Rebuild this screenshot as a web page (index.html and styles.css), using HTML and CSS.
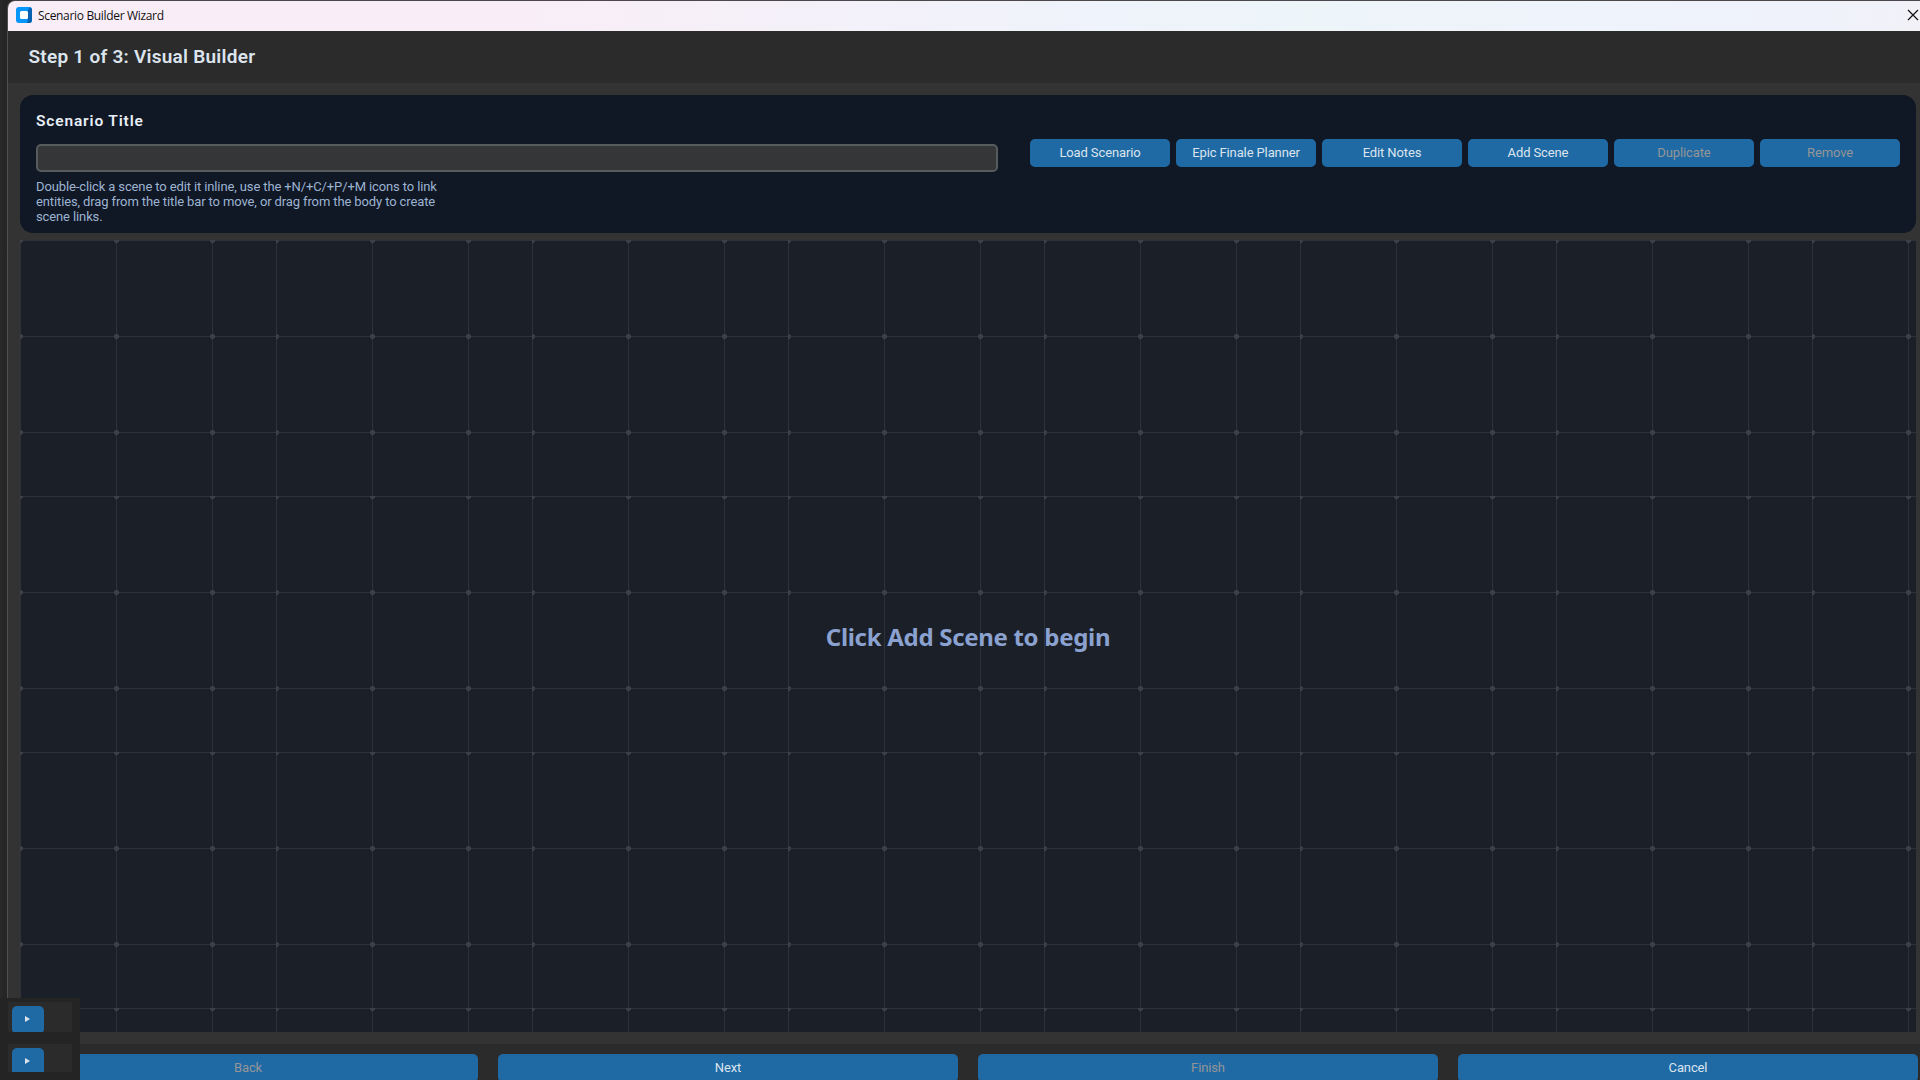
FILE: index.html
```html
<!DOCTYPE html>
<html lang="en">
<head>
<meta charset="utf-8">
<title>Scenario Builder Wizard</title>
<link rel="stylesheet" href="styles.css">
</head>
<body>
<div class="window">
  <div class="titlebar">
    <svg class="app-icon" width="16" height="16" viewBox="0 0 16 16"><rect width="16" height="16" rx="3" fill="#0596fb"/><path d="M12 3l2-2.700q2 .7 2 2.700v10q0 3-3 3h-2l1-4z" fill="#0562b1"/><rect x="4" y="4" width="8" height="8" rx="1.500" fill="#fff"/></svg>
    <span class="titlebar-text">Scenario Builder Wizard</span>
    <svg class="close" width="12" height="12" viewBox="0 0 12 12"><path d="M1 1l10 10M11 1L1 11" stroke="#111" stroke-width="1.200"/></svg>
  </div>
  <header class="step"><h1>Step 1 of 3: Visual Builder</h1></header>
  <main class="content">
    <section class="card">
      <div class="fields">
        <label class="label" for="title">Scenario Title</label>
        <input class="entry" id="title" type="text">
        <p class="hint">Double-click a scene to edit it inline, use the +N/+C/+P/+M icons to link<br>entities, drag from the title bar to move, or drag from the body to create<br>scene links.</p>
      </div>
      <div class="actions">
        <button class="btn">Load Scenario</button>
        <button class="btn">Epic Finale Planner</button>
        <button class="btn">Edit Notes</button>
        <button class="btn">Add Scene</button>
        <button class="btn" disabled>Duplicate</button>
        <button class="btn" disabled>Remove</button>
      </div>
    </section>
    <section class="canvas">
      <svg class="grid" width="1896" height="792">
        <defs>
          <path id="dot" d="M-1-2h3v1h1v3h-1v1h-3v-1h-1v-3h1z"/>
          <pattern id="tile" width="256" height="256" patternUnits="userSpaceOnUse">
            <path d="M0 0h256v1H0zM0 96h256v1H0zM0 192h256v1H0zM0 0h1v256H0zM96 0h1v256h-1zM192 0h1v256h-1z" fill="#2f323a"/>
            <g fill="#3c3f47">
              <use href="#dot" x="0" y="0"/><use href="#dot" x="96" y="0"/><use href="#dot" x="192" y="0"/>
              <use href="#dot" x="0" y="96"/><use href="#dot" x="96" y="96"/><use href="#dot" x="192" y="96"/>
              <use href="#dot" x="0" y="192"/><use href="#dot" x="96" y="192"/><use href="#dot" x="192" y="192"/>
            </g>
          </pattern>
        </defs>
        <rect width="1896" height="792" fill="url(#tile)"/>
      </svg>
      <div class="empty">Click Add Scene to begin</div>
    </section>
  </main>
  <footer class="nav">
    <button class="btn" disabled>Back</button>
    <button class="btn">Next</button>
    <button class="btn" disabled>Finish</button>
    <button class="btn">Cancel</button>
  </footer>
</div>
<aside class="side">
  <div class="side-row"><button class="side-btn"><svg width="5" height="6" viewBox="0 0 5 6"><path d="M0 0l5 3-5 3z" fill="#dce4ee"/></svg></button></div>
  <div class="side-row short"><button class="side-btn"><svg width="5" height="6" viewBox="0 0 5 6"><path d="M0 0l5 3-5 3z" fill="#dce4ee"/></svg></button></div>
</aside>
</body>
</html>
```
FILE: styles.css
```css
* { box-sizing: border-box; }
body {
  margin: 0;
  width: 1920px;
  height: 1080px;
  overflow: hidden;
  position: relative;
  padding: 0 0 0 7px;
  background: linear-gradient(90deg, #292929, #242424 7px);
  font-family: Roboto, sans-serif;
}
.window {
  height: 1080px;
  display: flex;
  flex-direction: column;
  background: #333;
  border-left: 1px solid #505050;
  border-top: 1px solid #4a464a;
  border-top-left-radius: 8px;
  overflow: hidden;
}
.titlebar {
  height: 30px;
  flex: none;
  display: flex;
  align-items: center;
  padding: 0 1px 2px 8px;
  background: linear-gradient(90deg, #f9eef7 0%, #f9eef7 27%, #f3f1f9 45%, #eff3fb 58%, #edf5f9 68%, #eff3fb 80%, #eff2fb 94%, #f2f1f8 100%);
}
.app-icon { flex: none; }
.titlebar-text {
  margin-left: 6px;
  padding-top: 2px;
  font: 12px/16px "Open Sans", sans-serif;
  letter-spacing: -0.33px;
  color: #111;
}
.close { margin-left: auto; }
.step {
  height: 52px;
  flex: none;
  display: flex;
  align-items: center;
  padding: 0 20.500px;
  background: #2b2b2b;
}
.step h1 {
  margin: 0;
  font-size: 19px;
  line-height: 24px;
  font-weight: 600;
  letter-spacing: 0.25px;
  color: #dce4ee;
}
.content {
  height: 961px;
  flex: none;
  display: flex;
  flex-direction: column;
  padding: 12px 4px 0 12px;
  gap: 7px;
}
.card {
  height: 138px;
  flex: none;
  display: flex;
  justify-content: space-between;
  padding: 16px;
  border-radius: 13px;
  background: #101725;
}
.fields { width: 962px; }
.label {
  display: block;
  height: 33px;
  font-size: 15.500px;
  line-height: 21px;
  font-weight: 600;
  letter-spacing: 0.85px;
  color: #e8eef6;
}
.entry {
  display: block;
  width: 962px;
  height: 28px;
  padding: 0 8px;
  border: 2px solid #565b5e;
  border-radius: 5px;
  background: #343638;
  color: #dce4ee;
  font: 13px Roboto, sans-serif;
}
.hint {
  margin: 7px 0 0;
  font-size: 13px;
  line-height: 15px;
  letter-spacing: -0.12px;
  white-space: nowrap;
  color: #9db4d1;
}
.actions {
  display: flex;
  gap: 6px;
  margin-top: 28px;
}
.btn {
  width: 140px;
  height: 28px;
  padding: 0;
  border: 0;
  border-radius: 5px;
  background: #1f6aa5;
  color: #dce4ee;
  font: 13px/28px Roboto, sans-serif;
  letter-spacing: -0.12px;
}
.btn:disabled { color: #959595; }
.canvas {
  height: 792px;
  flex: none;
  display: grid;
  place-items: center;
  background: #1b1f27;
}
.grid, .empty { grid-area: 1 / 1; }
.grid { display: block; }
.empty {
  z-index: 1;
  padding-top: 2px;
  font: 700 24px/32px "Noto Sans", sans-serif;
  letter-spacing: -0.3px;
  white-space: nowrap;
  color: #8ba2d1;
}
.nav {
  flex: 1;
  display: flex;
  gap: 20px;
  padding: 10px 2px 0 10px;
  background: #2b2b2b;
}
.nav .btn { width: 460px; flex: none; }
.side {
  position: absolute;
  left: 0;
  top: 998px;
  width: 80px;
  height: 82px;
  padding: 4px 8px;
  display: flex;
  flex-direction: column;
  gap: 12px;
  background: #242424;
}
.side-row {
  height: 30px;
  padding: 4px 4px 0;
  background: #2b2b2b;
  overflow: hidden;
}
.side-row.short { height: 28px; }
.side-btn {
  display: grid;
  place-items: center;
  width: 32px;
  height: 28px;
  padding: 0 1px 2px 0;
  border: 0;
  border-radius: 5px;
  background: #1f6aa5;
}
```
